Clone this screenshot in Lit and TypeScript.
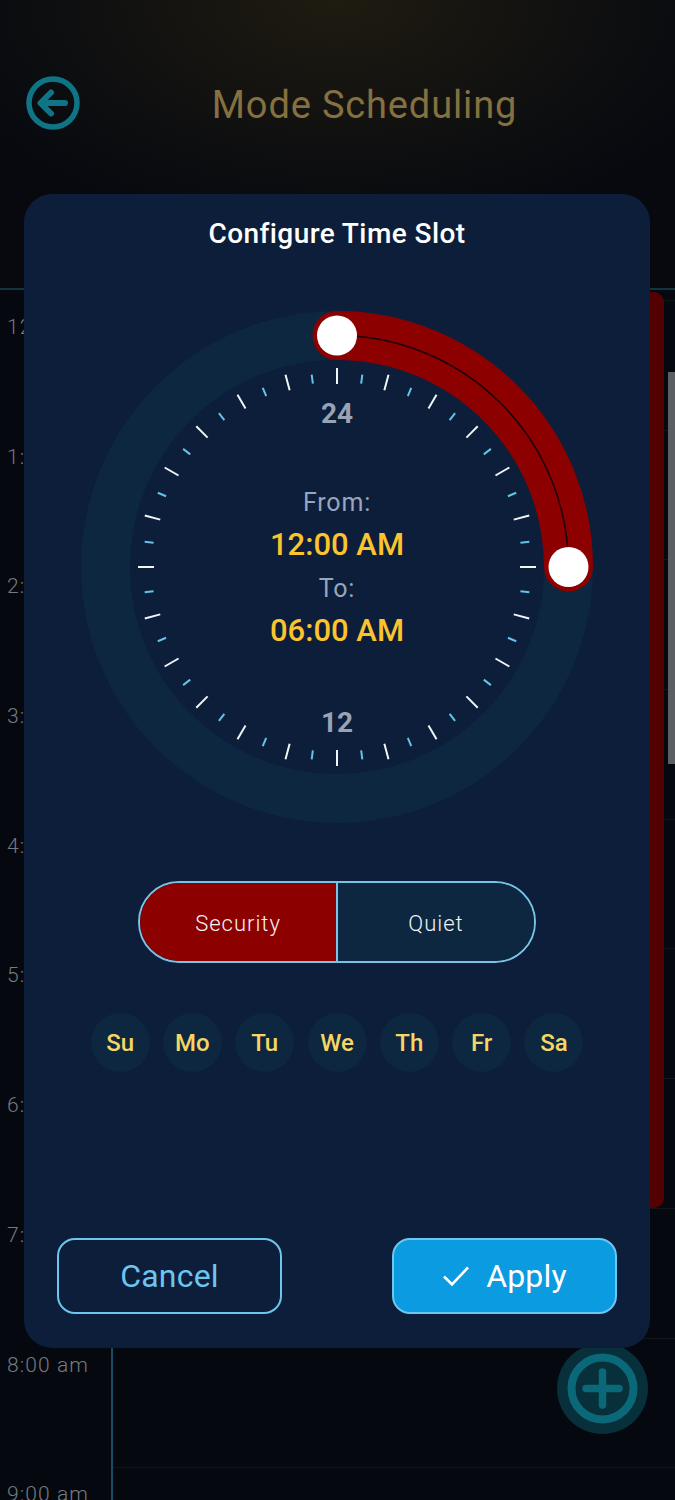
import { LitElement, html, css, svg } from "lit";
import { customElement } from "lit/decorators.js";

const HOURS = ["12:00 am", "1:00 am", "2:00 am", "3:00 am", "4:00 am", "5:00 am", "6:00 am", "7:00 am", "8:00 am", "9:00 am"];
const DAYS = ["Su", "Mo", "Tu", "We", "Th", "Fr", "Sa"];
const CX = 256;
const CY = 256;

// one tick every 7.5deg, alternate ones are the short blue kind
function ticks() {
  const out = [];
  for (let i = 0; i < 48; i++) {
    const a = (i * 7.5 * Math.PI) / 180;
    const major = i % 2 === 0;
    const r1 = major ? 183 : 185;
    const r2 = major ? 199 : 194;
    out.push(svg`<line
      x1=${CX + r1 * Math.sin(a)} y1=${CY - r1 * Math.cos(a)}
      x2=${CX + r2 * Math.sin(a)} y2=${CY - r2 * Math.cos(a)}
      stroke=${major ? "#f2f5f8" : "#62c4e8"}
      stroke-width="2"></line>`);
  }
  return out;
}

@customElement("app-root")
export class AppRoot extends LitElement {
  static styles = css`
    :host {
      display: block;
      position: relative;
      width: 675px;
      height: 1500px;
      overflow: hidden;
      background: #05080f;
      font-family: Roboto, "Noto Sans", sans-serif;
    }
    .top {
      height: 290px;
      box-sizing: border-box;
      padding: 76px 26px 0;
      display: flex;
      align-items: flex-start;
      border-bottom: 2px solid #12333f;
      background: radial-gradient(ellipse 420px 240px at 50% 0, #1f1b10 0%, #0d0e10 70%, #07090f 100%);
    }
    .back {
      width: 54px;
      height: 54px;
      flex: none;
    }
    .title {
      flex: 1;
      text-align: center;
      color: #85703f;
      font-size: 38px;
      line-height: 58px;
      letter-spacing: 0.85px;
    }
    .timeline {
      position: relative;
      padding-top: 10px;
    }
    .row {
      height: 129.7px;
      box-sizing: border-box;
      display: grid;
      grid-template-columns: 113px 1fr;
    }
    .hour {
      padding: 12px 0 0 7px;
      color: #757a7e;
      font-size: 21px;
      font-weight: 300;
      line-height: 30px;
      letter-spacing: 1.1px;
      border-right: 2px solid #164c64;
      white-space: nowrap;
    }
    .slot {
      border-top: 1px solid #11161d;
    }
    .event {
      position: absolute;
      top: 2px;
      right: 11px;
      width: 40px;
      height: 916px;
      border-radius: 10px;
      background: #520000;
    }
    .scroll {
      position: absolute;
      top: 82px;
      right: 0;
      width: 7px;
      height: 392px;
      background: #5b5f63;
    }
    .fab {
      position: absolute;
      left: 557px;
      top: 1343px;
      width: 91px;
      height: 91px;
    }
    .modal {
      position: absolute;
      left: 24px;
      top: 194px;
      width: 626px;
      height: 1154px;
      box-sizing: border-box;
      padding: 20px 33px 34px;
      border-radius: 28px;
      background: #0c1e3a;
      display: flex;
      flex-direction: column;
      align-items: center;
    }
    .modal h2 {
      margin: 0;
      color: #fff;
      font-size: 28px;
      font-weight: 500;
      line-height: 40px;
      letter-spacing: 0.42px;
    }
    .clock {
      position: relative;
      width: 512px;
      height: 512px;
      margin-top: 57px;
      flex: none;
    }
    .clock svg {
      display: block;
      overflow: visible;
    }
    .mark {
      font-family: Roboto, sans-serif;
      font-size: 28px;
      font-weight: 700;
      fill: #98a3b6;
      text-anchor: middle;
    }
    .readout {
      position: absolute;
      left: 0;
      right: 0;
      top: 170px;
      display: flex;
      flex-direction: column;
      align-items: center;
    }
    .lbl {
      height: 43px;
      line-height: 43px;
      color: #97a6bd;
      font-size: 25px;
      letter-spacing: 0.8px;
    }
    .time {
      height: 43px;
      line-height: 41px;
      color: #fcc42c;
      font-size: 31px;
      font-weight: 500;
    }
    .mode {
      display: flex;
      width: 398px;
      height: 82px;
      box-sizing: border-box;
      margin-top: 58px;
      border: 2px solid #79c3e6;
      border-radius: 41px;
      overflow: hidden;
      flex: none;
    }
    .mode div {
      flex: 1;
      display: flex;
      align-items: center;
      justify-content: center;
      padding-top: 3px;
      color: #f1f4f7;
      font-size: 22px;
      font-weight: 300;
      letter-spacing: 1px;
    }
    .mode .on {
      background: #8c0000;
      border-right: 2px solid #79c3e6;
    }
    .mode .off {
      background: #0d2741;
    }
    .days {
      display: flex;
      gap: 13.3px;
      margin-top: 50px;
    }
    .day {
      width: 59px;
      height: 59px;
      border-radius: 50%;
      background: #0d2741;
      display: flex;
      align-items: center;
      justify-content: center;
      color: #f6d662;
      font-size: 24px;
      font-weight: 500;
    }
    .actions {
      margin-top: auto;
      width: 100%;
      display: flex;
      justify-content: space-between;
    }
    .btn {
      width: 225px;
      height: 76px;
      box-sizing: border-box;
      border: 2.5px solid #6cc6ee;
      border-radius: 18px;
      display: flex;
      align-items: center;
      justify-content: center;
      gap: 16px;
      font-size: 32px;
      letter-spacing: 0.2px;
    }
    .cancel {
      color: #6cc6ee;
    }
    .apply {
      background: #0a9be0;
      color: #fff;
    }
    .apply svg {
      width: 28px;
      height: 24px;
    }
  `;

  render() {
    return html`
      <div class="top">
        <svg class="back" viewBox="0 0 54 54" fill="none" stroke="#0f7486">
          <circle cx="27" cy="27" r="24" stroke-width="5.5"></circle>
          <path d="M39 27H15M25 16.5 14.5 27 25 37.5" stroke-width="6" stroke-linecap="round" stroke-linejoin="round"></path>
        </svg>
        <div class="title">Mode Scheduling</div>
      </div>
      <div class="timeline">
        ${HOURS.map((h) => html`<div class="row"><div class="hour">${h}</div><div class="slot"></div></div>`)}
        <div class="event"></div>
        <div class="scroll"></div>
      </div>
      <svg class="fab" viewBox="0 0 91 91" fill="none">
        <circle cx="45.5" cy="45.5" r="45.5" fill="#07303a"></circle>
        <circle cx="45.5" cy="45.5" r="31" stroke="#0b6878" stroke-width="8"></circle>
        <path d="M45.5 29v33M29 45.5h33" stroke="#0b6878" stroke-width="7.5" stroke-linecap="round"></path>
      </svg>
      <div class="modal">
        <h2>Configure Time Slot</h2>
        <div class="clock">
          <svg width="512" height="512" viewBox="0 0 512 512" fill="none">
            <circle cx="256" cy="256" r="231.5" stroke="#0d2741" stroke-width="49"></circle>
            ${ticks()}
            <text class="mark" x="256" y="112">24</text>
            <text class="mark" x="256" y="421">12</text>
            <path d="M256 24.500A231.500 231.500 0 0 1 487.500 256" stroke="#8c0000" stroke-width="49" stroke-linecap="round"></path>
            <path d="M256 24.500A231.500 231.500 0 0 1 487.500 256" stroke="#1a0508" stroke-width="1.5"></path>
            <circle cx="256" cy="24.500" r="20" fill="#fff"></circle>
            <circle cx="487.500" cy="256" r="20" fill="#fff"></circle>
          </svg>
          <div class="readout">
            <div class="lbl">From:</div>
            <div class="time">12:00 AM</div>
            <div class="lbl">To:</div>
            <div class="time">06:00 AM</div>
          </div>
        </div>
        <div class="mode">
          <div class="on">Security</div>
          <div class="off">Quiet</div>
        </div>
        <div class="days">
          ${DAYS.map((d) => html`<div class="day">${d}</div>`)}
        </div>
        <div class="actions">
          <div class="btn cancel">Cancel</div>
          <div class="btn apply">
            <svg viewBox="0 0 28 24" fill="none" stroke="#fff" stroke-width="2.6">
              <path d="M2 12.500 10 20.500 26 3.500"></path>
            </svg>
            Apply
          </div>
        </div>
      </div>
    `;
  }
}
